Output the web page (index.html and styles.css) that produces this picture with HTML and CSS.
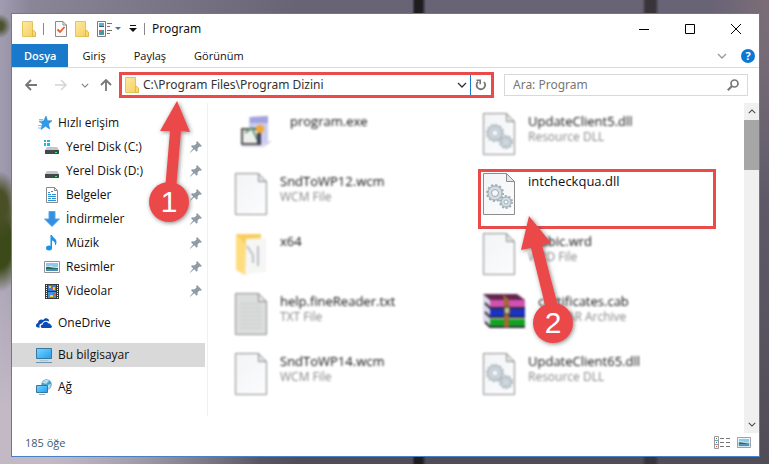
FILE: index.html
```html
<!DOCTYPE html>
<html lang="tr">
<head>
  <meta charset="UTF-8" />
  <meta name="viewport" content="width=device-width, initial-scale=1.0"/>
  <title>Program</title>
  <link rel="stylesheet" href="styles.css">
</head>
<body>

  <!-- Shared icons -->
  <svg class="sprite" aria-hidden="true">
    <defs>
      <linearGradient id="gold" x1="0" y1="0" x2="1" y2="1">
        <stop offset="0" stop-color="#ffeaa0"/><stop offset="1" stop-color="#f3cc5c"/>
      </linearGradient>
      <linearGradient id="sky" x1="0" y1="0" x2="1" y2="1">
        <stop offset="0" stop-color="#7ad4ff"/><stop offset="1" stop-color="#1f9ff0"/>
      </linearGradient>
      <linearGradient id="paper" x1="0" y1="0" x2="1" y2="1">
        <stop offset="0" stop-color="#f2f4f6"/><stop offset="1" stop-color="#fcfcfd"/>
      </linearGradient>
      <filter id="shadow" x="-30%" y="-30%" width="160%" height="160%">
        <feDropShadow dx="1" dy="1" stdDeviation="2" flood-color="#333" flood-opacity="0.6"/>
      </filter>
    </defs>
    <symbol id="folder" viewBox="0 0 14 16">
      <path d="M.5.5h10v10l3 1v4H.5z" fill="url(#gold)" stroke="#e6c45c"/>
      <path d="M10.500 11.500V9.500h1.500l1.500 2v4h-3z" fill="#f8d873" stroke="#deb84a"/>
    </symbol>
    <symbol id="pin" viewBox="0 0 12 12">
      <path d="M7 0l5 5-1.500.7-1-.3L7.500 7.500l.2 2.200-1 1-2.500-2.400L.3 11.700 0 11.300l3.200-3.700L1 5.200l1-1 2.300.3L6.600 2.400 6.200 1.200z" fill="#8e9ba6"/>
    </symbol>
    <symbol id="drive" viewBox="0 0 16 16">
      <path d="M3 8h10l2 3H1z" fill="#c3c7c9"/>
      <path d="M1 11h14v4H1z" fill="#424a4c"/>
      <path d="M11 13h2v1h-2z" fill="#37ee6c"/>
    </symbol>
    <symbol id="page" viewBox="0 0 34 44">
      <path d="M1.500 1.500h23l8 8v33h-31z" fill="url(#paper)" stroke="#8c8c8c"/>
      <path d="M24.500 1.500v8h8z" fill="#e4e6e8" stroke="#8c8c8c"/>
    </symbol>
    <symbol id="gears" viewBox="0 0 34 44">
      <use href="#page"/>
      <g fill="none" stroke="#a3afb8">
        <circle cx="13" cy="21" r="5.500" stroke="#d3dce2" stroke-width="5"/>
        <circle cx="13" cy="21" r="8" stroke-width="2" stroke-dasharray="2.100 2.089"/>
        <circle cx="13" cy="21" r="7"/>
        <circle cx="13" cy="21" r="3.500"/>
        <circle cx="24" cy="30" r="4" stroke="#d3dce2" stroke-width="4"/>
        <circle cx="24" cy="30" r="6" stroke-width="2" stroke-dasharray="1.885 1.885"/>
        <circle cx="24" cy="30" r="5"/>
        <circle cx="24" cy="30" r="2"/>
      </g>
    </symbol>
    <symbol id="picture" viewBox="0 0 16 12">
      <path d="M.5.5h15v11H.5z" fill="#fff" stroke="#929292"/>
      <path d="M2 2h12v8H2z" fill="#8ec9ef"/>
      <path d="M2 5h5l3 1h4v1H2z" fill="#e6f5fc"/>
      <path d="M2 6c4-1 6 1 12 1v1H2z" fill="#2c6964"/>
      <path d="M2 8h12v2H2z" fill="#468fb6"/>
    </symbol>
    <symbol id="chevron" viewBox="0 0 10 6">
      <path d="M1 1l4 4 4-4" fill="none" stroke="currentColor" stroke-width="1.300"/>
    </symbol>
  </svg>

  <div class="window">
    <header class="titlebar">
      <svg class="folder" width="14" height="16"><use href="#folder"/></svg>
      <span class="divider"></span>
      <button class="quick" aria-label="Özellikler">
        <svg width="12" height="16" viewBox="0 0 12 16">
          <path d="M.5.5H8l3.500 3.500v11.500H.5z" fill="#fafafa" stroke="#8b8b8b"/>
          <path d="M8 .5V4h3.500" fill="none" stroke="#8b8b8b"/>
          <path d="M2.500 8.500L5 11l4.500-5" fill="none" stroke="#ec5a25" stroke-width="1.800"/>
        </svg>
      </button>
      <button class="quick" aria-label="Yeni klasör"><svg width="14" height="16"><use href="#folder"/></svg></button>
      <button class="quick" aria-label="Görünüm seçenekleri">
        <svg width="24" height="16" viewBox="0 0 24 16">
          <path d="M.5.5h8v15h-8z" fill="#fff" stroke="#7c7c7c"/>
          <path d="M2 2h5v4H2z" fill="#58aae8"/><path d="M2 5h5v1H2z" fill="#2c6964"/>
          <path d="M2 9h5v5H2z" fill="#4f91cd"/><path d="M3 9h2v2H3z" fill="#eb5d3a"/><path d="M4 11h3v2H4z" fill="#40a84d"/>
          <path d="M10 2.500h5M10 5.500h3M10 9.500h5M10 12.500h3" stroke="#747474"/>
          <path d="M18 6h6l-3 3z" fill="#3d78b4"/>
        </svg>
      </button>
      <button class="quick customize" aria-label="Özelleştir">
        <svg width="8" height="8" viewBox="0 0 8 8"><path d="M1 .5h6" stroke="#111"/><path d="M0 3h8L4 7z" fill="#111"/></svg>
      </button>
      <span class="divider"></span>
      <h1>Program</h1>
      <div class="controls">
        <button aria-label="Simge durumuna küçült"><svg width="10" height="10" viewBox="0 0 10 10"><path d="M0 5.500h10" stroke="#000"/></svg></button>
        <button aria-label="Ekranı kapla"><svg width="10" height="10" viewBox="0 0 10 10"><path d="M.5.5h9v9h-9z" fill="none" stroke="#000"/></svg></button>
        <button aria-label="Kapat"><svg width="10" height="10" viewBox="0 0 10 10"><path d="M0 0l10 10M10 0L0 10" stroke="#000"/></svg></button>
      </div>
    </header>

    <nav class="tabs">
      <button class="active">Dosya</button>
      <button>Giriş</button>
      <button>Paylaş</button>
      <button>Görünüm</button>
      <div class="tab-tools">
        <button aria-label="Şeridi genişlet"><svg width="10" height="6"><use href="#chevron"/></svg></button>
        <button class="help" aria-label="Yardım">?</button>
      </div>
    </nav>

    <div class="toolbar">
      <button aria-label="Geri"><svg width="12" height="12" viewBox="0 0 12 12"><path d="M12 6H1.500M6 1L1 6l5 5" fill="none" stroke="#777" stroke-width="1.800"/></svg></button>
      <button class="forward" aria-label="İleri"><svg width="12" height="12" viewBox="0 0 12 12"><path d="M0 6h10.500M6 1l5 5-5 5" fill="none" stroke="#d4d4d4" stroke-width="1.500"/></svg></button>
      <button class="recent" aria-label="Son konumlar"><svg width="8" height="5"><use href="#chevron"/></svg></button>
      <button class="up" aria-label="Yukarı"><svg width="12" height="12" viewBox="0 0 12 12"><path d="M6 12V1.500M1 6l5-5 5 5" fill="none" stroke="#777" stroke-width="1.800"/></svg></button>
      <div class="address">
        <svg width="14" height="16"><use href="#folder"/></svg>
        <input type="text" aria-label="Adres" value="C:\Program Files\Program Dizini" />
        <button aria-label="Önceki konumlar"><svg width="10" height="6"><use href="#chevron"/></svg></button>
        <button class="refresh" aria-label="Yenile">
          <svg width="12" height="12" viewBox="0 0 12 12"><path d="M3.200 2.600A4.300 4.300 0 1 0 9 3" fill="none" stroke="#777" stroke-width="1.800"/><path d="M1.500 1.200H5.200V5.200" fill="none" stroke="#777" stroke-width="1.600"/></svg>
        </button>
      </div>
      <label class="search">
        <input type="text" aria-label="Ara" placeholder="Ara: Program" />
        <svg width="12" height="12" viewBox="0 0 12 12"><circle cx="7.500" cy="4.500" r="3.500" fill="none" stroke="#777" stroke-width="1.700"/><path d="M5 7L.8 11.200" stroke="#777" stroke-width="2"/></svg>
      </label>
    </div>

    <div class="content">
      <aside class="sidebar">
        <div class="group">
          <a href="#">
            <svg width="16" height="16" viewBox="0 0 16 16"><path d="M10 1l1.500 4.700H16l-3.500 3.200 1.200 5.100-4.200-2.700L5 14.500l1.500-5.300L3 6.200l4.700-.3z" fill="#2e9be8" stroke="#1878c4" stroke-width=".5"/><path d="M3 4.500h4M3 7h3M2 10.500h4M2 13h3" stroke="#75c6f5"/></svg>
            <span>Hızlı erişim</span>
          </a>
          <a href="#" class="sub">
            <svg width="16" height="16" viewBox="0 0 16 16"><use href="#drive"/><path d="M0 1h2v2H0zM3 1h3v2H3zM0 4h2v3H0zM3 4h3v3H3z" fill="#13baf0"/></svg>
            <span>Yerel Disk (C:)</span>
            <svg class="pin" width="12" height="12"><use href="#pin"/></svg>
          </a>
          <a href="#" class="sub">
            <svg width="16" height="16"><use href="#drive"/></svg>
            <span>Yerel Disk (D:)</span>
            <svg class="pin" width="12" height="12"><use href="#pin"/></svg>
          </a>
          <a href="#" class="sub">
            <svg width="16" height="16" viewBox="0 0 16 16"><path d="M2.500.5h8l3 3v12h-11z" fill="#fff" stroke="#8a8a8a"/><path d="M10.500.5v3h3" fill="none" stroke="#8a8a8a"/><path d="M4 5.500h2M7 4.500h2M4 7.500h3M8 7.500h4M4 9.500h8M4 11.500h3M8 11.500h4M4 13.500h8" stroke="#3090d5"/></svg>
            <span>Belgeler</span>
            <svg class="pin" width="12" height="12"><use href="#pin"/></svg>
          </a>
          <a href="#" class="sub">
            <svg width="16" height="16" viewBox="0 0 16 16"><path d="M5 .5h6V8h4.500L8 15.500.5 8H5z" fill="#348fe0" stroke="#55a7ee"/></svg>
            <span>İndirmeler</span>
            <svg class="pin" width="12" height="12"><use href="#pin"/></svg>
          </a>
          <a href="#" class="sub">
            <svg width="16" height="16" viewBox="0 0 16 16"><ellipse cx="5" cy="13" rx="3" ry="2.500" fill="#1494ee"/><path d="M6.500 0H8c.5 3 4.500 3.500 4.500 7 0 1.500-.5 2.500-1.500 3.500.5-3-1-4.500-3-5V13H6.500z" fill="#1494ee"/></svg>
            <span>Müzik</span>
            <svg class="pin" width="12" height="12"><use href="#pin"/></svg>
          </a>
          <a href="#" class="sub">
            <svg width="16" height="12"><use href="#picture"/></svg>
            <span>Resimler</span>
            <svg class="pin" width="12" height="12"><use href="#pin"/></svg>
          </a>
          <a href="#" class="sub">
            <svg width="16" height="16" viewBox="0 0 16 16"><path d="M1 1h14v15H1z" fill="#383838"/><path d="M2.500 2v13M13.500 2v13" stroke="#fff" stroke-dasharray="1 1"/><path d="M4 2h8v6H4z" fill="#387dce"/><path d="M4 9h8v6H4z" fill="#4593df"/><path d="M5 3h2v2H5zM9 4h2v3H9zM6 12h3v2H6z" fill="#f5cf30"/><path d="M7 5h2v2H7zM9 10h2v2H9z" fill="#d8543b"/></svg>
            <span>Videolar</span>
            <svg class="pin" width="12" height="12"><use href="#pin"/></svg>
          </a>
        </div>
        <div class="group">
          <a href="#">
            <svg width="16" height="16" viewBox="0 0 16 16"><path d="M2 12.500c-3-.5-2.500-4 0-4.500 0-3 3-4.500 5.200-3C9 2 13.500 3 13 6.500 9.500 4.500 6.500 6.500 6 8.500c-2.500 0-3.300 2.500-2 4z" fill="#0a4ab4"/><path d="M6 13c-2-.8-1.500-3.500.8-3.500C7 6.500 11 5.700 12.500 8.500c1.500 0 2.500.8 2.200 1.700 2 .5 1.500 2.800-.2 2.800z" fill="#0a4ab4"/></svg>
            <span>OneDrive</span>
          </a>
        </div>
        <div class="group">
          <a href="#" class="selected">
            <svg width="16" height="16" viewBox="0 0 16 16"><path d="M.5 1.500h15v10H.5z" fill="url(#sky)" stroke="#35799f"/><path d="M4 13.500h8" stroke="#b5c6d1"/><path d="M0 15.500h16" stroke="#6a93b0"/></svg>
            <span>Bu bilgisayar</span>
          </a>
        </div>
        <div class="group">
          <a href="#">
            <svg width="16" height="16" viewBox="0 0 16 16"><circle cx="10.500" cy="5.500" r="5.200" fill="#4a9fc6"/><path d="M6 4c2-4 6-4 7-2l-3 3-3-1zM11 6l4-1-1 4-2 1z" fill="#b8dceb"/><path d="M.5 6.500h11v7H.5z" fill="url(#sky)" stroke="#35799f"/><path d="M3 15.500h6" stroke="#8faabd"/></svg>
            <span>Ağ</span>
          </a>
        </div>
      </aside>

      <main class="files">
        <div class="file">
          <svg width="44" height="44" viewBox="0 0 44 44"><path d="M15 5l19-1v27l-6 2-13-4z" fill="#ccccf0"/><path d="M16 5l18-1v7H16z" fill="#a3a3de"/><path d="M8 17h18v15H8z" fill="#eef0ee" stroke="#555" stroke-width="2"/><path d="M11 21l7-5 6 13" stroke="#66997a" stroke-width="2" fill="none"/><circle cx="26" cy="17" r="4" fill="#f0a830"/><path d="M23 21h4v12h-4z" fill="#444458"/><path d="M8 34h22l7-5" stroke="#b4b4d0" fill="none"/></svg>
          <div class="info"><span class="name">program.exe</span></div>
        </div>
        <div class="file">
          <svg width="34" height="44"><use href="#gears"/></svg>
          <div class="info"><span class="name">UpdateClient5.dll</span><span class="type">Resource DLL</span></div>
        </div>
        <div class="file">
          <svg width="34" height="44"><use href="#page"/></svg>
          <div class="info"><span class="name">SndToWP12.wcm</span><span class="type">WCM File</span></div>
        </div>
        <div class="file highlight">
          <svg width="34" height="44"><use href="#gears"/></svg>
          <div class="info"><span class="name">intcheckqua.dll</span></div>
          <svg class="marker second" width="80" height="144" viewBox="0 0 80 144">
            <g filter="url(#shadow)">
              <path d="M23 6l22 27-9 2 16 61-12 3-15-61-10 2z" fill="#eb4a4a"/>
              <circle cx="47" cy="113" r="20" fill="#eb4a4a"/>
            </g>
            <text x="47" y="123" text-anchor="middle">2</text>
          </svg>
        </div>
        <div class="file">
          <svg width="34" height="44" viewBox="0 0 34 44"><path d="M2 2h25v6L12 43 2 37z" fill="#f8ce5c"/><path d="M12 7l20-1v34l-21 2z" fill="#f6f6f5"/><path d="M13 14l6 9v8M24 14v20" stroke="#b8c0c8" stroke-width="2" fill="none"/><path d="M2 2l9 10v31l-9-5z" fill="#ffdc7e"/></svg>
          <div class="info"><span class="name">x64</span></div>
        </div>
        <div class="file">
          <svg width="34" height="44"><use href="#page"/></svg>
          <div class="info"><span class="name">arabic.wrd</span><span class="type">WRD File</span></div>
        </div>
        <div class="file">
          <svg width="34" height="44" viewBox="0 0 34 44"><use href="#page"/><path d="M2 2h22v8h8v32H2z" fill="#dcdedd"/><path d="M6 12h20M6 16h22M6 20h22M6 24h22M6 28h22M6 32h22M6 36h22" stroke="#c6c8c8"/></svg>
          <div class="info"><span class="name">help.fineReader.txt</span><span class="type">TXT File</span></div>
        </div>
        <div class="file">
          <svg width="44" height="44" viewBox="0 0 44 44"><path d="M1 2h34l8 7v27H8L1 29z" fill="#d9d9e8"/><path d="M1 2h34l8 6H8z" fill="#65264e"/><path d="M8 8h35v7H8z" fill="#d250b5"/><path d="M8 17h35v8H8z" fill="#1932c8"/><path d="M8 27h35v8H8z" fill="#12a421"/><path d="M3 11l5 5h35M3 20l5 5h35M3 30l5 5h35" stroke="#332c3d" stroke-width="2" fill="none"/><path d="M21 2l6 6v27h-5V8z" fill="#a36b31"/><path d="M22 15h6v7h-6z" fill="#c5bda0" stroke="#383018"/></svg>
          <div class="info"><span class="name">certificates.cab</span><span class="type">WinRAR Archive</span></div>
        </div>
        <div class="file">
          <svg width="34" height="44"><use href="#page"/></svg>
          <div class="info"><span class="name">SndToWP14.wcm</span><span class="type">WCM File</span></div>
        </div>
        <div class="file">
          <svg width="34" height="44"><use href="#gears"/></svg>
          <div class="info"><span class="name">UpdateClient65.dll</span><span class="type">Resource DLL</span></div>
        </div>
      </main>

      <div class="scrollbar">
        <button aria-label="Yukarı kaydır"><svg class="flip" width="8" height="5"><use href="#chevron"/></svg></button>
        <div class="thumb"></div>
        <button class="down" aria-label="Aşağı kaydır"><svg width="8" height="5"><use href="#chevron"/></svg></button>
      </div>
    </div>

    <footer class="statusbar">
      <span>185 öğe</span>
      <button aria-label="Ayrıntılar">
        <svg width="16" height="13" viewBox="0 0 16 13"><path d="M.5.5h4v12h-4zM.5 4.500h4M.5 8.500h4" fill="#fff" stroke="#999"/><path d="M2 2h1v1H2z" fill="#42985e"/><path d="M2 6h1v1H2z" fill="#2586e6"/><path d="M2 10h1v1H2z" fill="#dd4444"/><path d="M6 2.500h4M12 2.500h4M6 6.500h4M12 6.500h4M6 10.500h4M12 10.500h4" stroke="#777"/></svg>
      </button>
      <button aria-label="Büyük simgeler"><svg width="14" height="11" viewBox="0 0 16 12" preserveAspectRatio="none"><use href="#picture"/></svg></button>
    </footer>

    <svg class="marker first" width="64" height="136" viewBox="0 0 64 136">
      <g filter="url(#shadow)">
        <path d="M39 7l13 31-9-1-5 59H27l5-59-10 0z" fill="#eb4a4a"/>
        <circle cx="31" cy="108" r="20" fill="#eb4a4a"/>
      </g>
      <text x="31" y="118" text-anchor="middle">1</text>
    </svg>
  </div>

</body>
</html>
```
FILE: styles.css
```css
* {
  box-sizing: border-box;
}
body {
  margin: 0;
  min-height: 100vh;
  padding: 13px 9px 7px 11px;
  display: flex;
  font-family: "Open Sans", "Noto Sans", sans-serif;
  font-size: 12px;
  line-height: 16px;
  color: #111;
  background:
    radial-gradient(ellipse 11px 12px at 0 26px, #4b5230 30%, transparent),
    radial-gradient(ellipse 18px 34px at 0 205px, #4a4f26 40%, transparent),
    radial-gradient(ellipse 24px 48px at 0 244px, #3c4a1a 50%, transparent),
    linear-gradient(90deg, transparent 412px, #1e1d20 415px, #1e1d20 422px, transparent 426px, transparent 642px, #38343a 646px, #38343a 655px, transparent 659px),
    radial-gradient(ellipse 260px 280px at 0 100%, #c2b9c5 20%, transparent),
    radial-gradient(ellipse 60px 200px at 100% 0, #7c6e78, transparent),
    linear-gradient(90deg, #a19cb0 0, #8a8698 30px, transparent 300px),
    linear-gradient(#686375, #514d57);
}
button {
  display: flex;
  align-items: center;
  justify-content: center;
  padding: 0;
  border: none;
  background: none;
  font: inherit;
  color: inherit;
  cursor: pointer;
}
input {
  min-width: 0;
  padding: 0;
  border: none;
  outline: none;
  background: none;
  font: inherit;
  color: inherit;
}
svg {
  display: block;
  flex: none;
}
.sprite {
  position: absolute;
  width: 0;
  height: 0;
}
.window {
  position: relative;
  flex: 1;
  min-width: 0;
  display: flex;
  flex-direction: column;
  background: #fff;
  border: 1px solid #4681c9;
}

/* title bar */
.titlebar {
  display: flex;
  align-items: center;
  height: 30px;
  padding-left: 10px;
}
.divider {
  width: 1px;
  height: 12px;
  margin: 0 7px;
  background: #888;
}
.folder + .divider {
  margin-right: 11px;
}
.quick {
  margin-right: 8px;
}
.quick.customize {
  margin-right: 0;
}
h1 {
  margin: 0;
  font-family: "Noto Sans", sans-serif;
  font-size: 12px;
  font-weight: normal;
}
.controls {
  display: flex;
  margin-left: auto;
}
.controls button {
  width: 46px;
  height: 29px;
}

/* ribbon tabs */
.tabs {
  display: flex;
  height: 24px;
  border-bottom: 1px solid #dadbdc;
}
.tabs > button {
  padding: 0 14px;
  font-size: 11px;
}
.tabs .active {
  padding: 0 12px;
  background: #1979ca;
  color: #fff;
  font-weight: 600;
}
.tab-tools {
  display: flex;
  align-items: center;
  gap: 14px;
  margin-left: auto;
  padding-right: 4px;
  color: #999;
}
.help {
  width: 14px;
  height: 14px;
  border-radius: 50%;
  background: #0c78d3;
  color: #fff;
  font-size: 11px;
  font-weight: bold;
}

/* address row */
.toolbar {
  display: flex;
  align-items: center;
  padding: 4px 11px 4px 13px;
  font-family: "Noto Sans", sans-serif;
  color: #777;
}
.toolbar > button {
  margin-right: 18px;
}
.toolbar .forward {
  margin-right: 14px;
}
.toolbar .recent {
  margin-right: 11px;
}
.toolbar .up {
  margin-right: 7px;
}
.address {
  flex: 1;
  display: flex;
  align-items: center;
  height: 26px;
  padding-left: 3px;
  border: 3px solid #eb4a4a;
  color: #333;
}
.address input {
  flex: 1;
  margin-left: 4px;
}
.address button {
  width: 17px;
  height: 20px;
}
.address .refresh {
  width: 21px;
  border-left: 1px solid #1979ca;
}
.search {
  display: flex;
  align-items: center;
  width: 244px;
  height: 22px;
  margin-left: 10px;
  padding: 0 8px;
  border: 1px solid #d9d9d9;
}
.search input {
  flex: 1;
}
.search input::placeholder {
  color: #777;
  opacity: 1;
}

/* main area */
.content {
  flex: 1;
  display: flex;
  padding-top: 1px;
}
.sidebar {
  width: 196px;
  margin-bottom: 17px;
  padding: 8px 2px 0 0;
  border-right: 1px solid #f0f0f0;
}
.group {
  margin-bottom: 8px;
}
.sidebar a {
  display: flex;
  align-items: center;
  gap: 6px;
  height: 24px;
  padding: 0 3px 0 24px;
  color: #111;
  text-decoration: none;
}
.sidebar .sub {
  padding-left: 32px;
}
.sidebar .selected {
  background: #d9d9d9;
}
.pin {
  margin-left: auto;
}
.files {
  flex: 1;
  display: grid;
  grid-template-columns: repeat(auto-fill, 238px);
  grid-auto-rows: 60px;
  column-gap: 10px;
  align-content: start;
  padding: 6px 0 0 22px;
}
.file {
  display: flex;
  align-items: flex-start;
  gap: 12px;
  padding: 3px 4px;
  filter: blur(1px);
}
.info {
  display: flex;
  flex-direction: column;
  padding-top: 1px;
}
.name {
  font-size: 13px;
}
.type {
  color: #888;
}
.file.highlight {
  position: relative;
  z-index: 1;
  padding: 0 1px;
  border: 3px solid #eb4a4a;
  filter: none;
}
.scrollbar {
  display: flex;
  flex-direction: column;
  width: 15px;
  background: #f0f0f0;
  color: #444;
}
.scrollbar button {
  height: 17px;
}
.thumb {
  height: 50px;
  background: #a6a6a6;
}
.scrollbar .down {
  margin-top: auto;
}
.flip {
  transform: rotate(180deg);
}

/* status bar */
.statusbar {
  display: flex;
  align-items: center;
  gap: 7px;
  height: 23px;
  padding: 0 8px 4px 13px;
  font-size: 11px;
  color: #3c5a78;
}
.statusbar span {
  margin-right: auto;
}

/* numbered arrows */
.marker {
  position: absolute;
  pointer-events: none;
}
.marker text {
  font: 30px "Liberation Sans", sans-serif;
  fill: #fff;
}
.marker.first {
  left: 126px;
  top: 80px;
}
.marker.second {
  left: 25px;
  top: 38px;
}
```
